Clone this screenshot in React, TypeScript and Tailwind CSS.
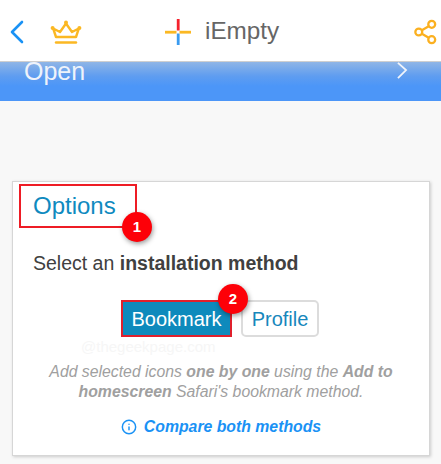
import { Info } from 'lucide-react';

function Crown() {
  return (
    <svg viewBox="0 0 32 26" className="h-[26px] w-[32px]" fill="none" stroke="#fbb823" strokeWidth="2.4" strokeLinejoin="round" strokeLinecap="round">
      <path d="M6 18 3.2 9.5 10 13 16 4.5 22 13 28.8 9.5 26 18Z" />
      <circle cx="16" cy="3.5" r="2" fill="#fbb823" stroke="none" />
      <circle cx="2.6" cy="9" r="2" fill="#fbb823" stroke="none" />
      <circle cx="29.4" cy="9" r="2" fill="#fbb823" stroke="none" />
      <path d="M6 23.5h20" strokeWidth="2.4" />
    </svg>
  );
}

function Logo() {
  return (
    <svg viewBox="0 0 26 26" className="h-[26px] w-[26px]">
      <rect x="11.8" y="0" width="2.8" height="11.5" fill="#f5222d" />
      <rect x="11.8" y="14.5" width="2.8" height="11.5" fill="#3a9bf0" />
      <rect x="0" y="11.8" width="11.5" height="2.8" fill="#fbb823" />
      <rect x="14.5" y="11.8" width="11.5" height="2.8" fill="#fbb823" />
    </svg>
  );
}

function Share() {
  return (
    <svg viewBox="0 0 24 26" className="h-[26px] w-[23px]" fill="none" stroke="#fbb020" strokeWidth="2.4">
      <circle cx="18.5" cy="5" r="3.6" />
      <circle cx="5" cy="13" r="3.6" />
      <circle cx="18.5" cy="21" r="3.6" />
      <path d="M8.2 11.2 15.4 6.9M8.2 14.8l7.2 4.3" />
    </svg>
  );
}

function Badge({ n, className }: { n: string; className: string }) {
  return (
    <span className={`absolute flex h-[30px] w-[30px] items-center justify-center rounded-full bg-[#fd0008] text-[15px] font-bold text-white shadow-[1px_2px_5px_rgba(0,0,0,0.4)] ${className}`}>
      {n}
    </span>
  );
}

export default function App() {
  return (
    <div className="h-[464px] w-[441px] overflow-hidden bg-[#f8f8f8] font-['Liberation_Sans',Arial,sans-serif]">
      {/* Top bar */}
      <div className="flex h-[62px] items-center border-b border-[#cfcfcf] bg-white pl-[10px] pr-[4px] pt-[2px]">
        <svg viewBox="0 0 14 24" className="h-[24px] w-[14px]" fill="none" stroke="#1a92f5" strokeWidth="2.6" strokeLinecap="round" strokeLinejoin="round">
          <path d="M12 2 2 12l10 10" />
        </svg>
        <div className="ml-[26px]">
          <Crown />
        </div>
        <div className="ml-[83px] flex items-center gap-[14px]">
          <Logo />
          <span className="text-[24.3px] leading-none text-[#666666]">iEmpty</span>
        </div>
        <div className="ml-auto">
          <Share />
        </div>
      </div>

      {/* Open row, scrolled under the bar */}
      <div className="flex h-[39px] items-start justify-between overflow-hidden bg-[linear-gradient(#8fb5e6_0px,#5f9df0_14px,#4c96f8_24px)] pl-[24px] pr-[33px] text-[#eef3fb]">
        <span className="-mt-[5px] text-[25px] leading-[28px]">Open</span>
        <svg viewBox="0 0 12 20" className="h-[18px] w-[12px]" fill="none" stroke="#f0f4fb" strokeWidth="2">
          <path d="M1.5 1 10.5 9 1.5 18" />
        </svg>
      </div>

      {/* Options card */}
      <div className="relative mx-[12px] mt-[80px] h-[275px] w-[418px] border border-[#d6d6d6] bg-white px-[20px] shadow-[1px_1px_3px_rgba(0,0,0,0.18)]">
        <div className="pt-[9px] text-[24px] leading-[30px] text-[#0f8abf]">Options</div>
        <span className="absolute left-[6px] top-[2px] h-[44px] w-[118px] border-2 border-[#ee1c25]" />
        <Badge n="1" className="left-[109px] top-[30px]" />

        <p className="mt-[30px] text-[19.5px] leading-[24px] text-[#404040]">
          Select an <b>installation method</b>
        </p>

        <div className="mt-[25px] flex justify-center gap-[9px]">
          <div className="relative -ml-[2px]">
            <button type="button" className="h-[37px] w-[111px] border-2 border-[#e0202c] bg-[#0e8abc] text-[20px] text-white">
              Bookmark
            </button>
            <Badge n="2" className="-right-[16px] -top-[16px]" />
          </div>
          <button type="button" className="h-[37px] w-[78px] rounded-[5px] border-2 border-[#dcdcdc] bg-white text-[20px] text-[#1787bc]">
            Profile
          </button>
        </div>

        {/* faint watermark under the buttons */}
        <span className="absolute left-[68px] top-[156px] text-[15px] leading-[18px] text-[#f6f6f6]">@thegeekpage.com</span>

        <p className="-mx-[4px] mt-[25px] text-center text-[15.8px] italic leading-[19.5px] text-[#a0a0a0]">
          Add selected icons <b>one by one</b> using the <b>Add to homescreen</b> Safari's bookmark method.
        </p>

        <div className="mt-[14px] flex items-center justify-center gap-[7px] text-[15.8px] font-bold italic text-[#1a92f5]">
          <Info className="h-[16px] w-[16px]" strokeWidth={2.2} />
          <span>Compare both methods</span>
        </div>
      </div>
    </div>
  );
}
